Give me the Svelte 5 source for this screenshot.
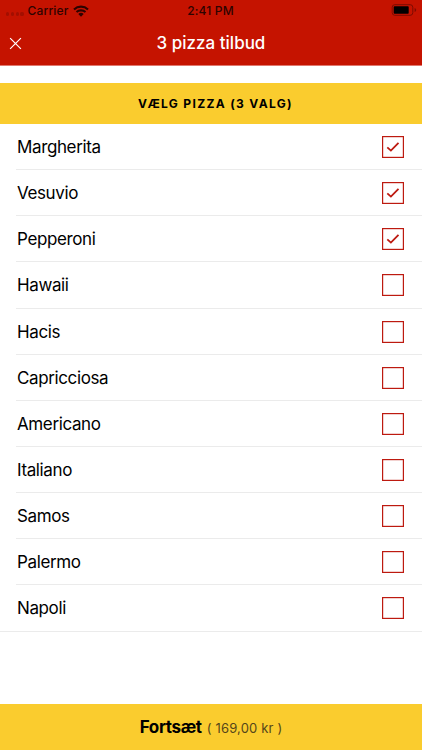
<script lang="ts">
    type Pizza = { name: string; selected: boolean };

    let pizzas: Pizza[] = [
        { name: "Margherita", selected: true },
        { name: "Vesuvio", selected: true },
        { name: "Pepperoni", selected: true },
        { name: "Hawaii", selected: false },
        { name: "Hacis", selected: false },
        { name: "Capricciosa", selected: false },
        { name: "Americano", selected: false },
        { name: "Italiano", selected: false },
        { name: "Samos", selected: false },
        { name: "Palermo", selected: false },
        { name: "Napoli", selected: false },
    ];
    const limit = 3;
    const price = "169,00 kr";

    $: count = pizzas.filter((p) => p.selected).length;

    function toggle(i: number) {
        if(!pizzas[i].selected && count >= limit){
            return;
        }
        pizzas[i].selected = !pizzas[i].selected;
    }
</script>

<div class="screen" lang="da">
    <header>
        <div class="status">
            <div class="carrier">
                <span class="dots"><i></i><i></i><i></i><i></i></span>
                <span>Carrier</span>
                <svg class="wifi" width="16" height="12" viewBox="0 0 16 12">
                    <path d="M1 4.4a10.2 10.2 0 0 1 14 0" />
                    <path d="M3.5 7.1a6.6 6.6 0 0 1 9 0" />
                    <path class="solid" d="M5.3 9.1a4 4 0 0 1 5.4 0L8 11.7z" />
                </svg>
            </div>
            <span class="time">2:41 PM</span>
            <svg class="battery" width="26" height="12" viewBox="0 0 26 12">
                <rect class="case" x="1.2" y="0.7" width="20.6" height="10.6" rx="2.6" />
                <rect x="2.7" y="2.3" width="15" height="7.4" rx="0.8" />
                <path class="tip" d="M23.6 4q1.6.5 1.6 2t-1.6 2z" />
            </svg>
        </div>
        <div class="nav">
            <button class="close" aria-label="Luk">
                <svg width="13" height="13" viewBox="0 0 13 13">
                    <path d="M1.1 1.1l10.8 10.8M11.9 1.1L1.1 11.9" />
                </svg>
            </button>
            <h1>3 pizza tilbud</h1>
        </div>
    </header>

    <h2>VÆLG PIZZA ({limit} VALG)</h2>

    <ul>
        {#each pizzas as { name, selected }, i}
            <li>
                <button class="row" on:click={() => toggle(i)}>
                    <span>{name}</span>
                    <svg class="box" width="22" height="22" viewBox="0 0 22 22">
                        <rect x="0.6" y="0.6" width="20.8" height="20.8" />
                        {#if selected}
                            <path d="M5.3 11.3l3.6 3.3 7.6-7.8" />
                        {/if}
                    </svg>
                </button>
            </li>
        {/each}
    </ul>

    <button class="continue">
        <strong>Fortsæt</strong>
        <span>( {price} )</span>
    </button>
</div>

<style>
    :global(body) {
        background: #fff;
    }
    .screen {
        display: flex;
        flex-direction: column;
        height: 750px;
        overflow: hidden;
        font-family: Inter, "Liberation Sans", sans-serif;
        color: #000;
    }
    button {
        border: 0;
        padding: 0;
        background: none;
        color: inherit;
        font: inherit;
    }
    header {
        flex: none;
        height: 65px;
        border-bottom: 1px solid #e0786e;
        background: #c51300;
        background-clip: padding-box;
    }
    .status {
        display: grid;
        grid-template-columns: 1fr auto 1fr;
        align-items: center;
        height: 21px;
        padding: 0 7px 0 6px;
        font-size: 12px;
        font-weight: 500;
        letter-spacing: 0.15px;
        color: #2e0300;
    }
    .carrier {
        display: flex;
        align-items: center;
    }
    .dots {
        display: flex;
        gap: 1.6px;
        margin: 7px 4px 0 0;
    }
    .dots i {
        width: 3.2px;
        height: 3.2px;
        border-radius: 50%;
        background: #a30f00;
    }
    .wifi {
        margin-left: 4px;
        fill: none;
        stroke: #2e0300;
        stroke-width: 2.1;
    }
    .wifi .solid {
        fill: #2e0300;
        stroke: none;
    }
    .battery {
        justify-self: end;
        margin: -1px -2px 0 0;
        fill: #000;
    }
    .battery .case {
        fill: none;
        stroke: #7d0c00;
        stroke-width: 1;
    }
    .battery .tip {
        fill: #7d0c00;
    }
    .nav {
        display: grid;
        grid-template-columns: 40px 1fr 40px;
        align-items: center;
        height: 44px;
        color: #fff;
    }
    .close {
        display: flex;
        padding-left: 9px;
    }
    .close svg {
        fill: none;
        stroke: #fff;
        stroke-width: 1.2;
    }
    h1 {
        margin: 0;
        text-align: center;
        font-size: 17px;
        font-weight: 500;
    }
    h2 {
        box-sizing: border-box;
        flex: none;
        height: 41px;
        margin: 17px 0 0;
        padding-left: 9px;
        background: #facc2e;
        text-align: center;
        font-size: 12px;
        line-height: 41px;
        font-weight: 700;
        letter-spacing: 1.33px;
    }
    ul {
        margin: 0;
        padding: 0;
        list-style: none;
        border-bottom: 1px solid #ebebeb;
    }
    li {
        height: 46.14px;
        padding-left: 16px;
    }
    .row {
        box-sizing: border-box;
        display: flex;
        align-items: center;
        justify-content: space-between;
        width: 100%;
        height: 100%;
        padding: 1px 18px 0 1px;
        border-bottom: 1px solid #ebebeb;
        font-size: 17px;
        letter-spacing: -0.38px;
        text-align: left;
    }
    li:last-child .row {
        border-bottom: 0;
        padding-top: 0;
    }
    .box {
        fill: none;
        stroke: #bd1a10;
        stroke-width: 1.2;
    }
    .box path {
        stroke-width: 1.8;
    }
    .continue {
        display: flex;
        align-items: baseline;
        justify-content: center;
        gap: 5px;
        height: 46px;
        margin-top: auto;
        background: #facc2e;
        line-height: 47px;
    }
    .continue strong {
        font-size: 17px;
        font-weight: 700;
        letter-spacing: -0.35px;
    }
    .continue span {
        font-size: 13px;
        letter-spacing: 0.17px;
        color: #54461a;
    }
</style>
